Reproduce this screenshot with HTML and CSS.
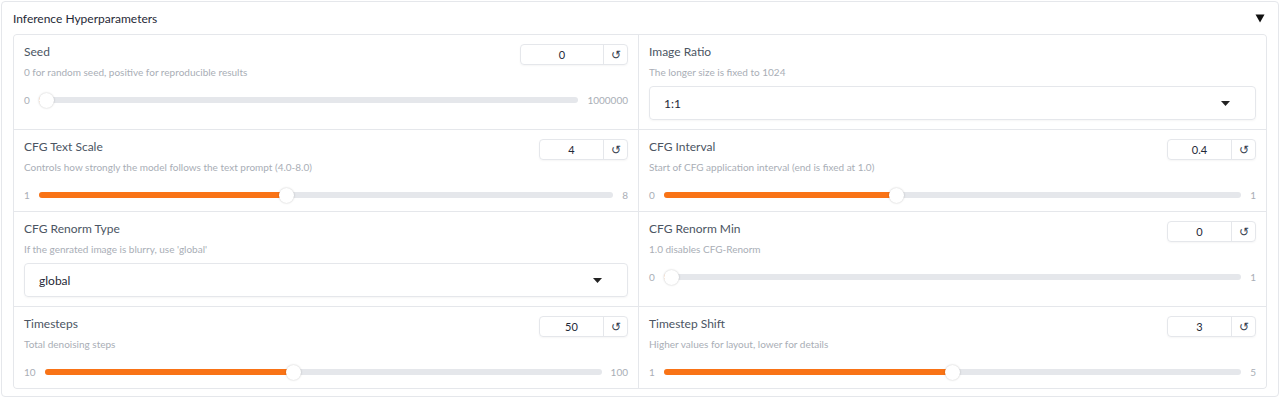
FILE: index.html
```html
<!DOCTYPE html>
<html lang="en">
	<head>
		<meta charset="utf-8">
		<title>Inference Hyperparameters</title>
		<link rel="stylesheet" href="styles.css">
	</head>
	<body>
		<div class="accordion">
			<div class="acc-head">
				<span class="acc-title">Inference Hyperparameters</span>
				<svg class="acc-arrow" width="10" height="9" viewBox="0 0 10 9"><path d="M0.5 0.5 L9.5 0.5 L5 8.5 Z" fill="#111"/></svg>
			</div>
			<div class="form">
				<!-- row 1 -->
				<div class="cell">
					<div class="cell-head">
						<span class="label">Seed</span>
						<div class="num num-wide"><span class="num-val">0</span><span class="num-reset">&#8634;</span></div>
					</div>
					<div class="info">0 for random seed, positive for reproducible results</div>
					<div class="slider">
						<span class="lim">0</span>
						<div class="track"><div class="fill" style="width: calc(8px + 0 * (100% - 16px));"></div><span class="thumb" style="left: calc(8px + 0 * (100% - 16px));"></span></div>
						<span class="lim">1000000</span>
					</div>
				</div>
				<div class="cell">
					<div class="cell-head"><span class="label">Image Ratio</span></div>
					<div class="info">The longer size is fixed to 1024</div>
					<div class="dropdown"><span>1:1</span><svg class="dd-arrow" width="9" height="5" viewBox="0 0 9 5"><path d="M0 0 L9 0 L4.5 5 Z" fill="#222"/></svg></div>
				</div>
				<!-- row 2 -->
				<div class="cell">
					<div class="cell-head">
						<span class="label">CFG Text Scale</span>
						<div class="num"><span class="num-val">4</span><span class="num-reset">&#8634;</span></div>
					</div>
					<div class="info">Controls how strongly the model follows the text prompt (4.0-8.0)</div>
					<div class="slider">
						<span class="lim">1</span>
						<div class="track"><div class="fill" style="width: calc(8px + 0.4286 * (100% - 16px));"></div><span class="thumb" style="left: calc(8px + 0.4286 * (100% - 16px));"></span></div>
						<span class="lim">8</span>
					</div>
				</div>
				<div class="cell">
					<div class="cell-head">
						<span class="label">CFG Interval</span>
						<div class="num"><span class="num-val">0.4</span><span class="num-reset">&#8634;</span></div>
					</div>
					<div class="info">Start of CFG application interval (end is fixed at 1.0)</div>
					<div class="slider">
						<span class="lim">0</span>
						<div class="track"><div class="fill" style="width: calc(8px + 0.4 * (100% - 16px));"></div><span class="thumb" style="left: calc(8px + 0.4 * (100% - 16px));"></span></div>
						<span class="lim">1</span>
					</div>
				</div>
				<!-- row 3 -->
				<div class="cell">
					<div class="cell-head"><span class="label">CFG Renorm Type</span></div>
					<div class="info">If the genrated image is blurry, use 'global'</div>
					<div class="dropdown"><span>global</span><svg class="dd-arrow" width="9" height="5" viewBox="0 0 9 5"><path d="M0 0 L9 0 L4.5 5 Z" fill="#222"/></svg></div>
				</div>
				<div class="cell">
					<div class="cell-head">
						<span class="label">CFG Renorm Min</span>
						<div class="num"><span class="num-val">0</span><span class="num-reset">&#8634;</span></div>
					</div>
					<div class="info">1.0 disables CFG-Renorm</div>
					<div class="slider">
						<span class="lim">0</span>
						<div class="track"><div class="fill" style="width: calc(8px + 0 * (100% - 16px));"></div><span class="thumb" style="left: calc(8px + 0 * (100% - 16px));"></span></div>
						<span class="lim">1</span>
					</div>
				</div>
				<!-- row 4 -->
				<div class="cell">
					<div class="cell-head">
						<span class="label">Timesteps</span>
						<div class="num"><span class="num-val">50</span><span class="num-reset">&#8634;</span></div>
					</div>
					<div class="info">Total denoising steps</div>
					<div class="slider">
						<span class="lim">10</span>
						<div class="track"><div class="fill" style="width: calc(8px + 0.4444 * (100% - 16px));"></div><span class="thumb" style="left: calc(8px + 0.4444 * (100% - 16px));"></span></div>
						<span class="lim">100</span>
					</div>
				</div>
				<div class="cell">
					<div class="cell-head">
						<span class="label">Timestep Shift</span>
						<div class="num"><span class="num-val">3</span><span class="num-reset">&#8634;</span></div>
					</div>
					<div class="info">Higher values for layout, lower for details</div>
					<div class="slider">
						<span class="lim">1</span>
						<div class="track"><div class="fill" style="width: calc(8px + 0.5 * (100% - 16px));"></div><span class="thumb" style="left: calc(8px + 0.5 * (100% - 16px));"></span></div>
						<span class="lim">5</span>
					</div>
				</div>
			</div>
		</div>
	</body>
</html>
```

FILE: styles.css
```css
html, body {
	background: #ffffff;
}
body {
	margin: 0;
	padding: 1px;
	font-family: "Lato", "Liberation Sans", sans-serif;
	color: #1f2937;
}

.accordion {
	width: 1278px;
	box-sizing: border-box;
	border: 1px solid #e5e7eb;
	border-radius: 4px;
	padding: 0 11px 7px;
}
.acc-head {
	height: 32px;
	display: flex;
	align-items: center;
	justify-content: space-between;
}
.acc-title {
	font-size: 12px;
	color: #1f2937;
}
.acc-arrow {
	margin-right: 2px;
	margin-top: 1px;
}

.form {
	display: grid;
	grid-template-columns: 624px 1fr;
	gap: 1px;
	background: #e5e7eb;
	border: 1px solid #e5e7eb;
	border-radius: 4px;
	overflow: hidden;
}
.cell {
	background: #ffffff;
	padding: 8px 10px 6px;
}
.cell-head {
	height: 22px;
	display: flex;
	align-items: flex-start;
	justify-content: space-between;
}
.label {
	font-size: 12px;
	line-height: 18px;
	color: #4b5563;
}
.info {
	font-size: 10px;
	line-height: 14px;
	color: #a9aeb6;
}

.num {
	margin-top: 1px;
	width: 87px;
	height: 19px;
	display: flex;
	border: 1px solid #e5e7eb;
	border-radius: 4px;
	box-shadow: 0 1px 2px rgba(0, 0, 0, 0.04);
	font-size: 11px;
}
.num-wide {
	width: 106px;
}
.num-val {
	flex: 1;
	text-align: center;
	line-height: 19px;
	color: #1f2937;
}
.num-reset {
	width: 23px;
	border-left: 1px solid #e5e7eb;
	text-align: center;
	line-height: 19px;
	font-size: 12px;
	color: #374151;
}

.slider {
	margin-top: 11px;
	height: 20px;
	display: flex;
	align-items: center;
	gap: 9px;
}
.lim {
	font-size: 10px;
	color: #a9aeb6;
}
.track {
	flex: 1;
	position: relative;
	height: 6px;
	border-radius: 3px;
	background: #e5e7eb;
}
.fill {
	height: 100%;
	border-radius: 3px;
	background: #f97316;
}
.thumb {
	position: absolute;
	top: 50%;
	width: 15px;
	height: 15px;
	margin: -7.5px 0 0 -7.5px;
	border-radius: 50%;
	background: #ffffff;
	box-shadow: 0 0 2px rgba(0, 0, 0, 0.25);
}

.dropdown {
	margin: 7px 0 3px;
	height: 32px;
	display: flex;
	align-items: center;
	justify-content: space-between;
	padding: 0 25px 0 14px;
	border: 1px solid #e5e7eb;
	border-radius: 4px;
	box-shadow: 0 1px 2px rgba(0, 0, 0, 0.04);
	font-size: 12px;
	color: #1f2937;
}
```
